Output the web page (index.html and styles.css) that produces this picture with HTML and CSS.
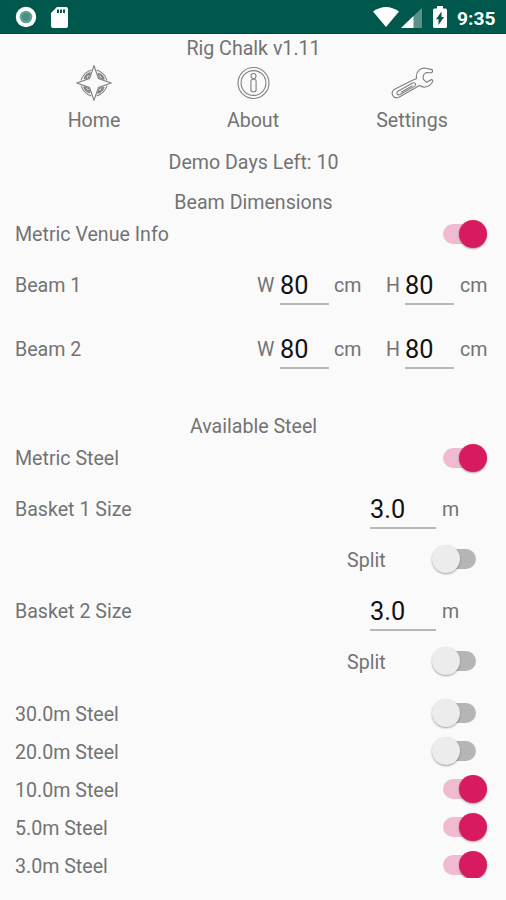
FILE: index.html
```
<!DOCTYPE html>
<html lang="en">
<head>
    <meta charset="UTF-8">
    <meta name="viewport" content="width=device-width, initial-scale=1.0">
    <title>Rig Chalk</title>
    <link rel="stylesheet" href="styles.css">
</head>
<body>
    <header class="status-bar">
        <svg class="record" width="22" height="22" viewBox="0 0 22 22">
            <circle cx="11" cy="11" r="10.2" fill="#fff"/>
            <circle cx="11" cy="11" r="6.3" fill="#65a396"/>
            <circle cx="11" cy="11" r="4" fill="#4a8f81"/>
        </svg>
        <svg class="sd-card" width="17" height="21" viewBox="0 0 17 21">
            <path d="M6 0H15Q17 0 17 2V19Q17 21 15 21H2Q0 21 0 19V6Z" fill="#fff"/>
            <path d="M6 2.5h2v3.5h-2zM9 2.5h2v3.5h-2zM12 2.5h2v3.5h-2z" fill="#00574b"/>
        </svg>
        <svg class="wifi" width="26" height="20" viewBox="0 0 26 20">
            <path d="M0 4.6Q13 -4.6 26 4.6L13 20Z" fill="#fff"/>
        </svg>
        <svg class="signal" width="21" height="20" viewBox="0 0 21 20">
            <path d="M21 0V20H0Z" fill="#5b9189"/>
            <path d="M12.5 8V20H0Z" fill="#fff"/>
        </svg>
        <svg class="battery" width="14" height="22" viewBox="0 0 14 22">
            <path d="M4 0H10V2.5H12.5Q14 2.5 14 4V20.5Q14 22 12.5 22H1.5Q0 22 0 20.5V4Q0 2.5 1.5 2.5H4Z" fill="#fff"/>
            <path d="M8.5 5.5V11H11L5.5 19V13.2H3Z" fill="#00574b"/>
        </svg>
        <span class="clock">9:35</span>
    </header>

    <h1 class="title">Rig Chalk v1.11</h1>

    <nav class="menu">
        <a class="menu-item">
            <svg width="36" height="36" viewBox="0 0 36 36">
                <path d="M18 .8L22.5 13.5L35.2 18L22.5 22.5L18 35.2L13.5 22.5L.8 18L13.5 13.5Z"/>
                <g id="leaf">
                    <path d="M20.7 5Q28.5 7.5 31 15.3M22 8Q27 9.5 28.4 14.5M23.2 12.3L22.4 9.5Q26.5 11 27 14Z"/>
                </g>
                <use href="#leaf" transform="rotate(90 18 18)"/>
                <use href="#leaf" transform="rotate(180 18 18)"/>
                <use href="#leaf" transform="rotate(270 18 18)"/>
            </svg>
            Home
        </a>
        <a class="menu-item">
            <svg width="36" height="36" viewBox="0 0 36 36">
                <circle cx="18.5" cy="18" r="15.5"/>
                <circle cx="18.5" cy="18" r="12.4"/>
                <circle cx="18.5" cy="11" r="2.5"/>
                <rect x="15.9" y="14.2" width="5.2" height="12.6" rx="2"/>
            </svg>
            About
        </a>
        <a class="menu-item">
            <svg width="44" height="36" viewBox="0 0 44 36">
                <path d="M26.5 13.5C25.5 7 30 2.3 35.5 3.2L42 4.6Q43.3 6.5 41.5 7.8L36 7.6Q32 10 33.5 14.5L36.5 17.3L41.8 14.4Q43.6 15.2 42.2 17.5C39.5 22 33.5 23.5 29.5 20.5L8.5 32.5Q4.5 34 2.6 30.2Q1 26.5 4.5 24.2L23.5 14.8Q25 14.3 26.5 13.5Z"/>
                <path d="M8 26.3L22.5 18Q25 17.2 25.6 19Q26 20.3 24.4 21.4L10 29.5Q7.8 30.5 7 28.7Q6.6 27.2 8 26.3ZM11 27.3L22.5 20.7"/>
            </svg>
            Settings
        </a>
    </nav>

    <p class="demo">Demo Days Left: 10</p>

    <form>
        <h2>Beam Dimensions</h2>
        <label class="row">Metric Venue Info
            <span class="switch on"></span>
        </label>
        <div class="row size">
            <span class="name">Beam 1</span>
            <span>W</span><input type="text" value="80"><span>cm</span>
            <span>H</span><input type="text" value="80"><span>cm</span>
        </div>
        <div class="row size beam-2">
            <span class="name">Beam 2</span>
            <span>W</span><input type="text" value="80"><span>cm</span>
            <span>H</span><input type="text" value="80"><span>cm</span>
        </div>

        <h2 class="steel-heading">Available Steel</h2>
        <label class="row">Metric Steel
            <span class="switch on"></span>
        </label>
        <div class="row basket">
            <span class="name">Basket 1 Size</span>
            <input type="text" value="3.0"><span>m</span>
        </div>
        <label class="row split">Split
            <span class="switch"></span>
        </label>
        <div class="row basket">
            <span class="name">Basket 2 Size</span>
            <input type="text" value="3.0"><span>m</span>
        </div>
        <label class="row split">Split
            <span class="switch"></span>
        </label>

        <div class="steel-list">
            <label class="row">30.0m Steel <span class="switch"></span></label>
            <label class="row">20.0m Steel <span class="switch"></span></label>
            <label class="row">10.0m Steel <span class="switch on"></span></label>
            <label class="row">5.0m Steel <span class="switch on"></span></label>
            <label class="row">3.0m Steel <span class="switch on"></span></label>
        </div>
    </form>
</body>
</html>
```
FILE: styles.css
```
* {
    box-sizing: border-box;
}

body {
    margin: 0;
    height: 900px;
    overflow: hidden;
    background-color: #fafafa;
    color: #737373;
    font-family: Roboto, sans-serif;
    font-size: 19.6px;
    line-height: 23px;
}

h1, h2, p {
    margin: 0;
    font-size: inherit;
    font-weight: normal;
    text-align: center;
}

.status-bar {
    display: flex;
    align-items: center;
    height: 34px;
    padding: 1px 10px 0 15px;
    background-color: #00574b;
    border-bottom: 1px solid #004438;
}

.sd-card {
    margin-left: 14px;
}

.wifi {
    margin-left: auto;
}

.signal {
    margin: 1px 0 0 2px;
}

.battery {
    margin-left: 11px;
}

.clock {
    width: 39px;
    margin: 2px 0 0 10px;
    color: #fff;
    font-size: 19.2px;
    font-weight: 700;
    white-space: nowrap;
}

.title {
    height: 29px;
    padding: 3px 0 0 1px;
}

.menu {
    display: grid;
    grid-template-columns: repeat(3, 159px);
    justify-content: center;
    height: 69px;
}

.menu-item {
    display: flex;
    flex-direction: column;
    align-items: center;
    gap: 8px;
    padding-top: 2px;
}

.menu-item svg {
    fill: none;
    stroke: #808080;
    stroke-width: 1.1;
}

.demo {
    height: 60px;
    padding-left: 1px;
    line-height: 61px;
}

h2 {
    height: 21px;
    padding-left: 1px;
    line-height: 21px;
}

.row {
    display: flex;
    align-items: center;
    justify-content: space-between;
    height: 43px;
    padding: 0 19px 0 15px;
}

.size,
.basket {
    display: grid;
    height: 58px;
    padding-right: 0;
}

.size {
    grid-template-columns: 242px 23px 49px 5px 52px 19px 49px 6px 1fr;
    justify-content: start;
}

.size input + span {
    grid-column: span 2;
    padding-left: 5px;
}

.size input:last-of-type + span {
    padding-left: 6px;
}

.beam-2 {
    margin-top: 6px;
}

.basket {
    grid-template-columns: 355px 66px 1fr;
}

.basket input + span {
    padding-left: 6px;
}

input {
    width: 100%;
    height: 40px;
    padding: 2px 0 0;
    border: none;
    border-bottom: 2px solid #b8b8b8;
    background: none;
    color: #111;
    font-family: inherit;
    font-size: 25.3px;
    outline: none;
}

.steel-heading {
    height: 22px;
    margin-top: 37px;
    line-height: 23px;
}

.split {
    height: 44px;
    padding-left: 347px;
}

.steel-list {
    height: 183px;
    margin-top: 11px;
    overflow: hidden;
}

.steel-list .row {
    height: 38px;
}

.switch {
    position: relative;
    width: 55px;
    height: 28px;
    margin-top: -2px;
}

.switch::before {
    content: "";
    position: absolute;
    left: 11px;
    top: 4px;
    width: 33px;
    height: 20px;
    border-radius: 10px;
    background-color: #b5b5b5;
}

.switch::after {
    content: "";
    position: absolute;
    left: 0;
    top: 0;
    width: 28px;
    height: 28px;
    border-radius: 50%;
    background-color: #ececec;
    box-shadow: 0 1px 2px rgba(0, 0, 0, 0.35);
}

.switch.on::before {
    background-color: #f0bbd0;
}

.switch.on::after {
    left: 27px;
    background-color: #d81b60;
}
```
